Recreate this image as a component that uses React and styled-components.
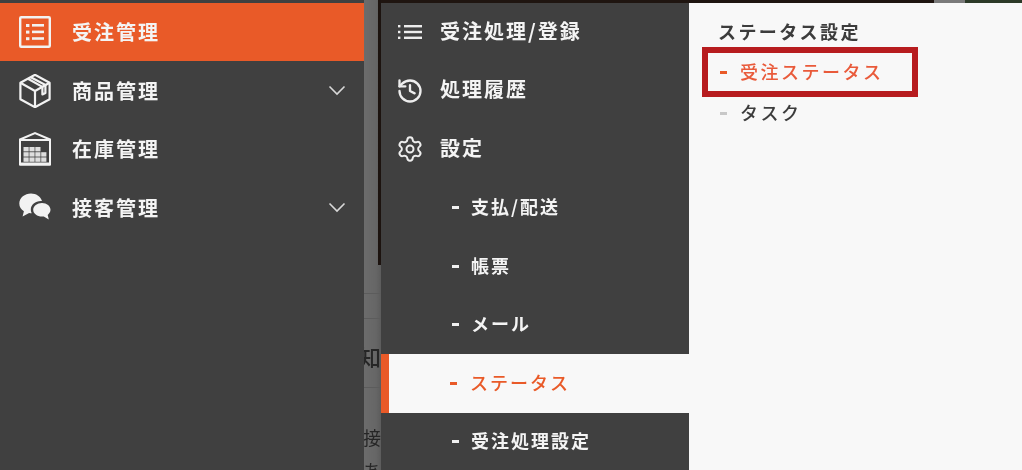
import React from "react";
import styled, { createGlobalStyle } from "styled-components";
import { History, Settings } from "lucide-react";

const Global = createGlobalStyle`
  html, body { margin: 0; padding: 0; background: #404040; }
  body { font-family: "Noto Sans CJK JP", "Noto Sans", sans-serif; }
`;

const Page = styled.div`
  display: flex;
  width: 1022px;
  height: 470px;
  overflow: hidden;
  background: #404040;
  filter: blur(0.35px);
`;

const Sidebar = styled.nav`
  width: 364px;
  flex: none;
  padding-top: 3px;
  box-sizing: border-box;
  background: #404040;
`;

const NavRow = styled.div`
  display: flex;
  align-items: center;
  height: ${(p) => (p.$active ? "57.5px" : "58.5px")};
  margin-bottom: ${(p) => (p.$active ? "1px" : "0")};
  box-sizing: border-box;
  padding: ${(p) => (p.$active ? "1px" : "0")} 18px 0 19px;
  background: ${(p) => (p.$active ? "#e95a28" : "transparent")};
  color: #fff;
`;

const NavIcon = styled.svg`
  width: 32px;
  height: 34px;
  flex: none;
  margin-right: 21px;
  color: #f2f2f2;
`;

const NavLabel = styled.span`
  flex: 1;
  font-size: 20px;
  line-height: 1;
  font-weight: 700;
  letter-spacing: 2px;
  color: #f4f4f4;
`;

const Chevron = styled.svg`
  width: 18px;
  height: 11px;
  flex: none;
  color: #d8d8d8;
`;

const Backdrop = styled.div`
  position: relative;
  width: 17px;
  flex: none;
  overflow: hidden;
  background: linear-gradient(to right, #6c6c6c 0, #666 70%, #5c5c5c 100%);
  font-size: 22px;
  line-height: 1;
  color: #222;
`;

const BackdropEdge = styled.div`
  position: absolute;
  top: 0;
  right: 0;
  width: 3px;
  height: 265px;
  background: #1c130f;
`;

const BackdropRule = styled.div`
  position: absolute;
  left: 0;
  right: 0;
  top: ${(p) => p.$y}px;
  height: 1px;
  background: #5c5c5c;
`;

const BackdropText = styled.span`
  position: absolute;
  top: ${(p) => p.$y}px;
  right: 0;
  white-space: nowrap;
  font-size: ${(p) => p.$size}px;
  font-weight: ${(p) => p.$weight};
  color: #262626;
`;

const Overlay = styled.div`
  flex: 1;
  display: flex;
  flex-direction: column;
`;

const TopBand = styled.div`
  display: flex;
  height: 3px;
  flex: none;
`;

const BandPart = styled.div`
  flex: ${(p) => p.$w}px 0 0;
  background: ${(p) => p.$c};
`;

const Panels = styled.div`
  flex: 1;
  display: flex;
  min-height: 0;
`;

const SubNav = styled.div`
  width: 308px;
  flex: none;
  background: #404040;
`;

const SubRow = styled.div`
  display: flex;
  align-items: center;
  height: 58.5px;
  padding: 0 0 3px 17px;
  box-sizing: border-box;
  color: #f4f4f4;
  font-size: 20px;
  line-height: 1;
  font-weight: 700;
  letter-spacing: 2px;
  svg {
    flex: none;
    margin-right: 18px;
    margin-top: 3px;
  }
  svg.lucide {
    margin-left: -2px;
    margin-right: 16px;
  }
`;

const ChildRow = styled.div`
  display: flex;
  align-items: center;
  height: 58.5px;
  padding: 0 0 3px ${(p) => (p.$active ? "61px" : "71px")};
  box-sizing: border-box;
  background: ${(p) => (p.$active ? "#f8f8f8" : "transparent")};
  border-left: ${(p) => (p.$active ? "8px solid #e95a28" : "none")};
  color: ${(p) => (p.$active ? "#e95a28" : "#f4f4f4")};
  font-size: 18px;
  line-height: 1;
  font-weight: ${(p) => (p.$active ? 500 : 700)};
  letter-spacing: 2px;
`;

const Dash = styled.i`
  display: block;
  flex: none;
  width: 7px;
  height: 3px;
  margin-top: 3px;
  margin-right: ${(p) => p.$gap ?? 12}px;
  background: ${(p) => p.$c};
`;

const Detail = styled.div`
  position: relative;
  flex: 1;
  background: #f8f8f8;
  padding: 17px 0 0 29px;
`;

const DetailTitle = styled.div`
  font-size: 18px;
  line-height: 22px;
  font-weight: 700;
  letter-spacing: 2.4px;
  color: #3c3c3c;
`;

const DetailItem = styled.div`
  display: flex;
  align-items: center;
  height: 41px;
  padding: 0 0 3px 2px;
  box-sizing: border-box;
  font-size: 18px;
  line-height: 1;
  font-weight: 500;
  letter-spacing: 2.5px;
  color: ${(p) => p.$c};
`;

const DetailList = styled.div`
  margin-top: 10px;
`;

const Highlight = styled.div`
  position: absolute;
  left: 13px;
  top: 44px;
  width: 216px;
  height: 50px;
  box-sizing: border-box;
  border: 6px solid #b71c1f;
  pointer-events: none;
`;

const OrderIcon = () => (
  <NavIcon viewBox="0 0 32 34" fill="none">
    <rect x="1.2" y="2.2" width="29.6" height="29.6" rx="1" stroke="currentColor" strokeWidth="2.4" />
    <g fill="currentColor">
      <rect x="7" y="9" width="3.4" height="3" />
      <rect x="13" y="9" width="12" height="2.6" />
      <rect x="7" y="15.6" width="3.4" height="3" />
      <rect x="13" y="15.6" width="12" height="2.6" />
      <rect x="7" y="22.2" width="3.4" height="3" />
      <rect x="13" y="22.2" width="12" height="2.6" />
    </g>
  </NavIcon>
);

const BoxIcon = () => (
  <NavIcon viewBox="0 0 32 34" fill="none" stroke="currentColor" strokeWidth="2.2" strokeLinejoin="round">
    <path d="M16 .8 30.6 8.8V25.2L16 33.2 1.4 25.2V8.8Z" />
    <path d="M1.4 8.8 16 17 30.6 8.8M16 17V33.2" />
    <path d="M9 4.8 23.4 12.9V20.5L26.4 19V11L11.8 3.2" />
  </NavIcon>
);

const WarehouseIcon = () => (
  <NavIcon viewBox="0 0 32 34">
    <path d="M1 7.5 16 1.2 31 7.5V32.5H1Z" fill="none" stroke="currentColor" strokeWidth="2" />
    <path d="M1 7H31V9H1Z" fill="currentColor" />
    <path d="M1 30.5H31V33.5H1Z" fill="currentColor" />
    <g fill="#dedede">
      {[0, 1, 2].map((r) =>
        [0, 1, 2, 3].map((c) =>
          r === 0 && c > 2 ? null : (
            <rect key={`${r}-${c}`} x={4.5 + c * 5.9} y={15 + r * 5.2} width="5.2" height="4.4" />
          )
        )
      )}
    </g>
  </NavIcon>
);

const ChatIcon = () => (
  <NavIcon viewBox="0 0 32 34" fill="currentColor">
    <path d="M12 2.5C5.8 2.5.3 6.8.3 12.5c0 3.4 1.8 6 4.6 7.8L3.6 25.5l6.5-3.5c1 .2 1.6.2 2.6.2-.6-1.3-.9-2.4-.9-3.5 0-5 4.6-8.6 10-8.6h1.2C21.4 5.2 17 2.5 12 2.5Z" />
    <path d="M23 12c-4.8 0-8.8 3-8.8 6.8s4 6.8 8.8 6.8c.6 0 1.2 0 1.8-.2l5 3.1-1.1-4.6c1.6-1.3 2.8-3.1 2.8-5.1 0-3.8-3.7-6.8-8.5-6.8Z" />
  </NavIcon>
);

const Down = () => (
  <Chevron viewBox="0 0 18 11" fill="none" stroke="currentColor" strokeWidth="1.6">
    <path d="M1.5 1.5 9 9l7.5-7.5" />
  </Chevron>
);

const ListIcon = () => (
  <svg width="24" height="16" viewBox="0 0 24 16" fill="#ededed">
    <rect x="0" y="1" width="2.4" height="2.4" />
    <rect x="0" y="6.8" width="2.4" height="2.4" />
    <rect x="0" y="12.6" width="2.4" height="2.4" />
    <rect x="6" y="1" width="18" height="2.4" />
    <rect x="6" y="6.8" width="18" height="2.4" />
    <rect x="6" y="12.6" width="18" height="2.4" />
  </svg>
);

export default function App() {
  return (
    <>
      <Global />
      <Page>
        <Sidebar>
          <NavRow $active>
            <OrderIcon />
            <NavLabel>受注管理</NavLabel>
          </NavRow>
          <NavRow>
            <BoxIcon />
            <NavLabel>商品管理</NavLabel>
            <Down />
          </NavRow>
          <NavRow>
            <WarehouseIcon />
            <NavLabel>在庫管理</NavLabel>
          </NavRow>
          <NavRow>
            <ChatIcon />
            <NavLabel>接客管理</NavLabel>
            <Down />
          </NavRow>
        </Sidebar>
        <Backdrop>
          <BackdropEdge />
          <BackdropRule $y={293} />
          <BackdropRule $y={318} />
          <BackdropRule $y={387} />
          <BackdropText $y={345} $size={22} $weight={500}>知</BackdropText>
          <BackdropText $y={428} $size={18} $weight={400}>理接</BackdropText>
          <BackdropText $y={461} $size={18} $weight={400}>あ</BackdropText>
        </Backdrop>
        <Overlay>
          <TopBand>
            <BandPart $w={553} $c="#1f1510" />
            <BandPart $w={31} $c="#7a7a7a" />
            <BandPart $w={57} $c="#2c3a28" />
          </TopBand>
          <Panels>
            <SubNav>
              <SubRow>
                <ListIcon />
                受注処理/登録
              </SubRow>
              <SubRow>
                <History size={28} strokeWidth={2} color="#ededed" />
                処理履歴
              </SubRow>
              <SubRow>
                <Settings size={28} strokeWidth={1.7} color="#ededed" />
                設定
              </SubRow>
              <ChildRow>
                <Dash $c="#f0f0f0" />
                支払/配送
              </ChildRow>
              <ChildRow>
                <Dash $c="#f0f0f0" />
                帳票
              </ChildRow>
              <ChildRow>
                <Dash $c="#f0f0f0" />
                メール
              </ChildRow>
              <ChildRow $active>
                <Dash $c="#e95a28" $gap={13} />
                ステータス
              </ChildRow>
              <ChildRow>
                <Dash $c="#f0f0f0" />
                受注処理設定
              </ChildRow>
            </SubNav>
            <Detail>
              <DetailTitle>ステータス設定</DetailTitle>
              <DetailList>
                <DetailItem $c="#e95a3a">
                  <Dash $c="#e95a28" $gap={13} />
                  受注ステータス
                </DetailItem>
                <DetailItem $c="#3c3c3c">
                  <Dash $c="#c8c8c8" $gap={13} />
                  タスク
                </DetailItem>
              </DetailList>
              <Highlight />
            </Detail>
          </Panels>
        </Overlay>
      </Page>
    </>
  );
}
